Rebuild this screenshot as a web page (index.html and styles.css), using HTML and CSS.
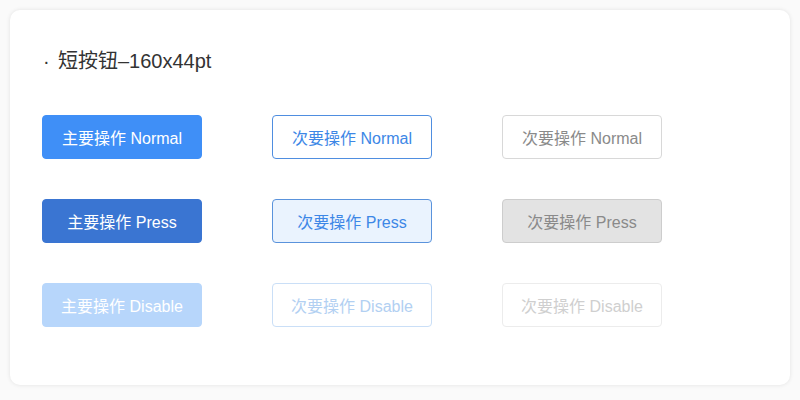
FILE: index.html
```html
<!DOCTYPE html>
<html lang="zh">
<head>
<meta charset="utf-8">
<link rel="stylesheet" href="styles.css">
</head>
<body>
<div class="card">
  <div class="title"><span class="dot">·</span>短按钮–160x44pt</div>
  <div class="grid">
    <div class="btn p-normal">主要操作 Normal</div>
    <div class="btn s-normal">次要操作 Normal</div>
    <div class="btn t-normal">次要操作 Normal</div>
    <div class="btn p-press">主要操作 Press</div>
    <div class="btn s-press">次要操作 Press</div>
    <div class="btn t-press">次要操作 Press</div>
    <div class="btn p-disable">主要操作 Disable</div>
    <div class="btn s-disable">次要操作 Disable</div>
    <div class="btn t-disable">次要操作 Disable</div>
  </div>
</div>
</body>
</html>
```

FILE: styles.css
```css
html, body { margin: 0; padding: 0; background: #fafafa; }
body {
  padding: 10px;
  font-family: "Liberation Sans", "Noto Sans CJK SC", sans-serif;
}
.card {
  width: 780px;
  height: 375px;
  box-sizing: border-box;
  background: #fff;
  border-radius: 10px;
  box-shadow: 0 0 4px rgba(0,0,0,0.10);
  padding: 38px 32px 0 32px;
}
.title {
  font-size: 20px;
  line-height: 26px;
  color: #333;
  padding-left: 1px;
}
.dot { display: inline-block; width: 15px; }
.grid {
  margin-top: 41px;
  display: grid;
  grid-template-columns: 160px 160px 160px;
  column-gap: 70px;
  row-gap: 40px;
}
.btn {
  height: 44px;
  box-sizing: border-box;
  border-radius: 4px;
  border: 1px solid transparent;
  display: flex;
  align-items: center;
  justify-content: center;
  font-size: 16px;
}
.p-normal { background: #3f8ff7; color: #fff; border-color: #3f8ff7; }
.p-press { background: #3a75d2; color: #fff; border-color: #3a75d2; }
.p-disable { background: #b7d6fb; color: #fff; border-color: #b7d6fb; }
.s-normal { background: #fff; color: #3d87e6; border-color: #4f8ee0; }
.s-press { background: #eaf3fe; color: #3d87e6; border-color: #5a93dc; }
.s-disable { background: #fff; color: #b2d0f2; border-color: #cadff7; }
.t-normal { background: #fff; color: #8a8a8a; border-color: #d8d8d8; }
.t-press { background: #e3e3e3; color: #8a8a8a; border-color: #cdcdcd; }
.t-disable { background: #fff; color: #cfcfcf; border-color: #ececec; }
```
